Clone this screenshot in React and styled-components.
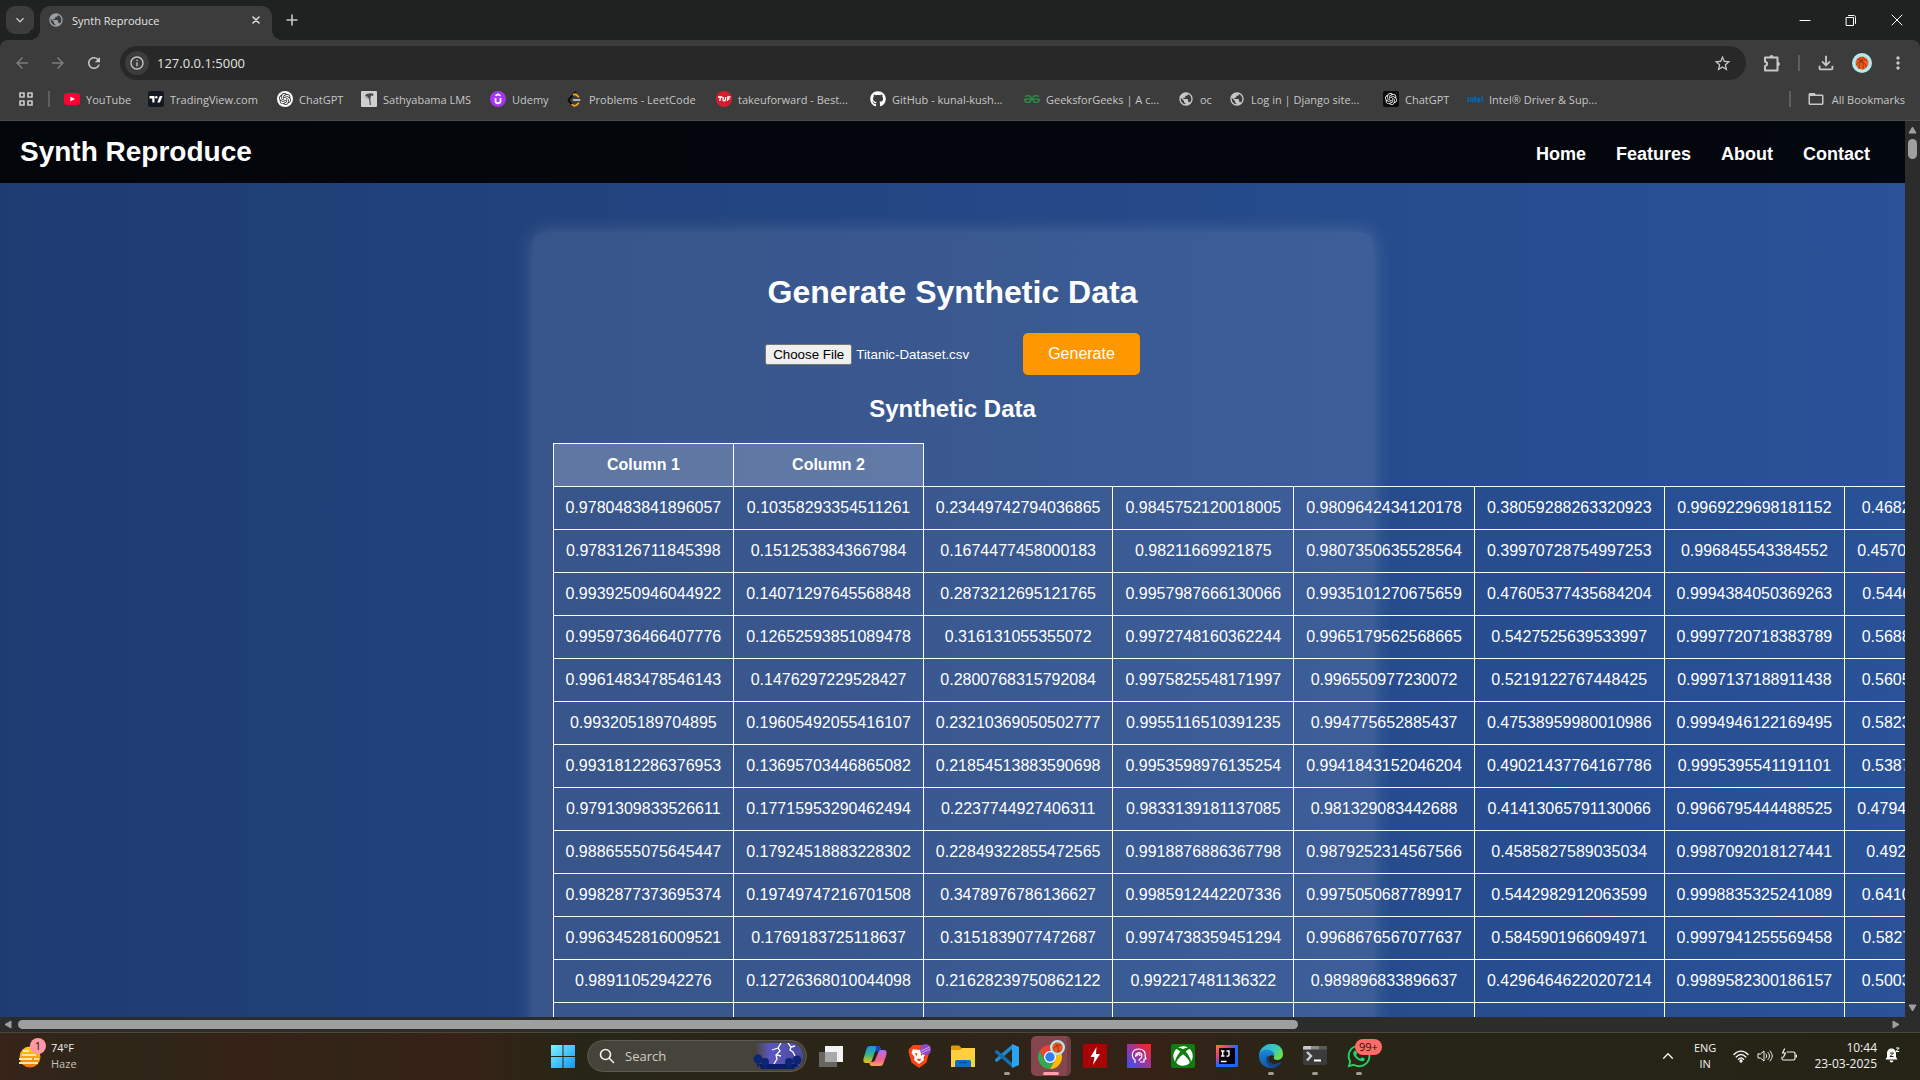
import React, { useEffect, useRef } from "react";
import styled, { createGlobalStyle } from "styled-components";
import {
  MdArrowBack, MdArrowForward, MdRefresh, MdStarBorder,
  MdOutlineFileDownload, MdMoreVert, MdFolderOpen, MdPublic, MdInfoOutline, MdExpandMore,
} from "react-icons/md";
import { FaGithub, FaXbox, FaWhatsapp } from "react-icons/fa";
import { SiOpenai, SiGeeksforgeeks } from "react-icons/si";

const UI = `"Open Sans", "Noto Sans", sans-serif`;
const ARIAL = `"Liberation Sans", Arial, sans-serif`;

const GlobalStyle = createGlobalStyle`
  *, *::before, *::after { box-sizing: border-box; }
  body { margin: 0; overflow: hidden; background: #1f2221; }
  svg { display: block; flex: none; }
`;

const Desktop = styled.div`
  display: flex;
  flex-direction: column;
  height: 100vh;
  font-family: ${UI};
  font-size: 12px;
  color: #c7c7c7;
`;

/* ---------- browser frame ---------- */

const TabStrip = styled.header`
  display: flex;
  align-items: center;
  height: 40px;
  flex: none;
  background: #1f2221;
`;

const IconButton = styled.button`
  display: flex;
  align-items: center;
  justify-content: center;
  flex: none;
  width: ${(p) => p.$w || 36}px;
  height: ${(p) => p.$h || 28}px;
  padding: 0;
  border: 0;
  border-radius: ${(p) => p.$radius || 0}px;
  background: ${(p) => p.$bg || "transparent"};
  color: ${(p) => p.$color || "#c7c7c7"};
`;

const TabSearch = styled(IconButton)`
  margin: 0 6px;
`;

const Tab = styled.div`
  position: relative;
  display: flex;
  align-items: center;
  align-self: flex-end;
  width: 232px;
  height: 34px;
  padding: 0 4px 6px 8px;
  border-radius: 10px 10px 0 0;
  background: #3c3c3c;
  color: #e3e3e3;
  font-size: 11px;

  &::before, &::after {
    content: "";
    position: absolute;
    bottom: 0;
    width: 10px;
    height: 10px;
  }
  &::before {
    right: 100%;
    background: radial-gradient(circle at 0 0, #1f2221 10px, #3c3c3c 10px);
  }
  &::after {
    left: 100%;
    background: radial-gradient(circle at 100% 0, #1f2221 10px, #3c3c3c 10px);
  }
`;

const TabTitle = styled.span`
  flex: 1;
  margin-left: 8px;
  white-space: nowrap;
`;

const NewTab = styled(IconButton)`
  margin-left: 6px;
`;

const WindowControls = styled.div`
  display: flex;
  margin-left: auto;
`;

const Toolbar = styled.div`
  display: flex;
  align-items: center;
  flex: none;
  height: 46px;
  padding: 0 4px;
  background: #3c3c3c;
  border-radius: 8px 8px 0 0;
`;

const AddressBar = styled.div`
  display: flex;
  align-items: center;
  flex: 1;
  height: 34px;
  margin: 0 8px;
  padding: 0 6px 0 5px;
  border-radius: 17px;
  background: #282828;
`;

const AddressInput = styled.input`
  flex: 1;
  min-width: 0;
  margin-left: 8px;
  padding: 0;
  border: 0;
  outline: 0;
  background: transparent;
  color: #e3e3e3;
  font-family: ${UI};
  font-size: 13px;
  line-height: 20px;
`;

const Divider = styled.span`
  flex: none;
  width: 2px;
  height: 16px;
  background: #5c5e5f;
`;

const ToolbarDivider = styled(Divider)`
  margin: 0 8px;
`;

const BookmarksBar = styled.nav`
  display: flex;
  align-items: center;
  flex: none;
  height: 35px;
  padding: 0 15px 8px 18px;
  border-bottom: 1px solid #4c4c4c;
  background: #3c3c3c;
  font-size: 11px;
`;

const AppsDivider = styled(Divider)`
  margin: 0 14px;
`;

const BookmarkList = styled.div`
  display: flex;
  flex: 1;
  min-width: 0;
`;

const Bookmark = styled.a`
  display: flex;
  align-items: center;
  gap: 6px;
  flex: none;
  width: ${(p) => (p.$w ? `${p.$w}px` : "auto")};
  color: #c7c7c7;
  text-decoration: none;
  white-space: nowrap;
`;

const AllBookmarks = styled(Bookmark)`
  margin-left: 16px;
  gap: 7px;
`;

const Favicon = styled.span`
  display: flex;
  align-items: center;
  justify-content: center;
  flex: none;
  width: 16px;
  height: 16px;
  border-radius: ${(p) => p.$radius || 0}px;
  background: ${(p) => p.$bg || "transparent"};
  color: ${(p) => p.$color || "#fff"};
`;

/* ---------- page viewport and scrollbars ---------- */

const Viewport = styled.div`
  display: grid;
  grid-template-columns: minmax(0, 1fr) 15px;
  grid-template-rows: minmax(0, 1fr) 15px;
  flex: 1;
  min-height: 0;
  background: #2c2c2c;
`;

const Page = styled.main`
  overflow: hidden;
  background: linear-gradient(to right, #1e3c72, #2a5298);
  font-family: ${ARIAL};
  font-size: 16px;
  line-height: 18px;
  color: #fff;
  text-align: center;
`;

const VerticalBar = styled.div`
  display: flex;
  flex-direction: column;
  align-items: center;
  padding: 5px 0;
`;

const VerticalThumb = styled.span`
  width: 9px;
  height: 20px;
  margin: 5px 0 auto;
  border-radius: 5px;
  background: #9f9f9f;
`;

const HorizontalBar = styled.div`
  display: flex;
  align-items: center;
  padding: 0 5px 0 4px;
`;

const HorizontalTrack = styled.span`
  flex: 1;
  margin: 0 6px;
`;

const HorizontalThumb = styled.span`
  display: block;
  width: calc(100% * 1905 / 2780);
  height: 9px;
  border-radius: 5px;
  background: #9f9f9f;
`;

const SiteHeader = styled.header`
  display: flex;
  align-items: center;
  justify-content: space-between;
  padding: 15px 20px;
  background: rgba(0, 0, 0, 0.91);
`;

const Logo = styled.div`
  font-size: 28px;
  line-height: 32px;
  font-weight: bold;
`;

const SiteNav = styled.nav`
  display: flex;
  gap: 30px;
  padding: 5px 15px 0;
`;

const NavLink = styled.a`
  color: #fff;
  font-size: 18px;
  line-height: 21px;
  font-weight: bold;
  text-decoration: none;
`;

const Card = styled.section`
  max-width: 840px;
  margin: 50px auto;
  padding: 20px;
  border-radius: 10px;
  background: rgba(255, 255, 255, 0.1);
  box-shadow: 0 0 20px rgba(255, 255, 255, 0.2);
`;

const Title = styled.h1`
  margin: 21px 0 23px;
  font-size: 32px;
  line-height: 36px;
`;

const Subtitle = styled.h2`
  margin: 20px 0 21px;
  font-size: 24px;
  line-height: 27px;
`;

const UploadForm = styled.form`
  display: flex;
  align-items: center;
  justify-content: center;
  gap: 5px;
`;

const FileInput = styled.input`
  width: 253px;
  color: #fff;
  font-family: ${ARIAL};
`;

const GenerateButton = styled.button`
  padding: 12px 25px;
  border: 0;
  border-radius: 5px;
  background: #ff9800;
  color: #fff;
  font-family: ${ARIAL};
  font-size: 16px;
  line-height: 18px;
`;

const DataTable = styled.table`
  width: 100%;
  border-collapse: collapse;
  white-space: nowrap;

  th, td {
    height: 43px;
    padding: 12px;
    border: 1px solid #fff;
  }
  th {
    background: rgba(255, 255, 255, 0.2);
  }
`;

/* ---------- taskbar ---------- */

const Taskbar = styled.footer`
  display: grid;
  grid-template-columns: 1fr auto 1fr;
  align-items: center;
  flex: none;
  height: 48px;
  padding: 0 0 2px 2px;
  border-top: 1px solid #4b473d;
  background: linear-gradient(
    to right, #38241a 0%, #2f2518 4%, #2d2517 8%, #352217 12%, #322317 18%, #372217 24%,
    #272616 30%, #2b2518 45%, #2f2418 52%, #352217 60%, #2a2517 67%, #272516 75%, #242416 100%
  );
  color: #f2f2f2;
`;

const Weather = styled.div`
  display: flex;
  align-items: center;
  gap: 7px;
  padding-left: 16px;
  line-height: 16px;
  font-size: 11px;
`;

const WeatherIcon = styled.span`
  position: relative;
  width: 26px;
  height: 30px;
  padding-top: 4px;
`;

const Badge = styled.span`
  position: absolute;
  top: ${(p) => p.$top}px;
  left: ${(p) => p.$left}px;
  min-width: 16px;
  padding: 0 ${(p) => p.$pad || 0}px;
  border-radius: 8px;
  background: ${(p) => p.$bg};
  color: #1c1010;
  font-size: 11px;
  line-height: 16px;
  text-align: center;
`;

const Muted = styled.div`
  color: #c9c2bd;
`;

const Apps = styled.div`
  display: flex;
  align-items: center;
`;

const AppButton = styled.button`
  position: relative;
  display: flex;
  align-items: center;
  justify-content: center;
  width: 44px;
  height: 40px;
  padding: 0;
  border: 0;
  background: transparent;
  font-family: ${UI};

  &::after {
    content: "";
    position: absolute;
    bottom: 1px;
    left: calc(50% - ${(p) => (p.$active ? 8 : 3)}px);
    width: ${(p) => (p.$active ? 16 : p.$open ? 6 : 0)}px;
    height: 3px;
    border-radius: 2px;
    background: ${(p) => (p.$active ? "#ff9fab" : "#a09c92")};
  }
`;

const ActiveTile = styled.span`
  display: flex;
  align-items: center;
  justify-content: center;
  width: 40px;
  height: 40px;
  border-right: 4px solid #713d41;
  border-radius: 5px;
  background: #84454c;
`;

const XboxTile = styled.span`
  display: flex;
  align-items: center;
  justify-content: center;
  width: 24px;
  height: 24px;
  border-radius: 2px;
  background: #107c10;
  color: #fff;
`;

const SearchBox = styled.label`
  display: flex;
  align-items: center;
  width: 220px;
  height: 32px;
  margin: 0 2px;
  padding: 0 3px 0 11px;
  border: 1px solid #5c5a4e;
  border-radius: 16px;
  background: #46443a;
`;

const SearchInput = styled.input`
  flex: 1;
  min-width: 0;
  margin-left: 10px;
  padding: 0;
  border: 0;
  outline: 0;
  background: transparent;
  font-family: ${UI};
  font-size: 13px;

  &::placeholder { color: #cfcdc6; opacity: 1; }
`;

const Tray = styled.div`
  display: flex;
  align-items: center;
  justify-content: flex-end;
  padding-right: 20px;
  font-size: 12px;
  line-height: 16px;
`;

const Language = styled.div`
  margin: 0 17px 0 19px;
  font-size: 11px;
  text-align: center;
`;

const StatusIcons = styled.div`
  display: flex;
  gap: 8px;
`;

const Clock = styled.div`
  margin: 0 7px 0 17px;
  text-align: right;
`;

/* ---------- drawings ---------- */

const Triangle = ({ d, w = 9, h = 8 }) => (
  <svg width={w} height={h} viewBox={`0 0 ${w} ${h}`} fill="#9f9f9f" stroke="#9f9f9f" strokeLinejoin="round"><path d={d} /></svg>
);
const Line = ({ d, size = 16, width = 1, children }) => (
  <svg width={size} height={size} viewBox="0 0 16 16" fill="none" stroke="currentColor" strokeWidth={width} strokeLinejoin="round" strokeLinecap="round">
    <path d={d} />{children}
  </svg>
);

const ExtensionIcon = () => (
  <svg width="20" height="20" viewBox="0 0 20 20" fill="none" stroke="currentColor" strokeWidth="2" strokeLinejoin="round">
    <path d="M3 4.500h12.500v13H3V13c2.800-.3 2.800-4 0-4.300z" />
    <path d="M7.500 4a2 2 0 0 1 4 0zM16 9a2 2 0 0 1 0 4z" fill="currentColor" stroke="none" />
  </svg>
);
const YouTubeIcon = () => (
  <svg width="16" height="16" viewBox="0 0 16 16"><rect y="2" width="16" height="12" rx="3" fill="#ff0033" /><path d="M6.400 5.400v5.200L11 8z" fill="#fff" /></svg>
);
const TradingIcon = () => (
  <svg width="16" height="16" viewBox="0 0 16 16"><rect width="16" height="16" rx="2" fill="#131722" /><path d="M1.500 5h5v6.500H4.300V7.500H1.500z" fill="#fff" /><circle cx="8.300" cy="6.200" r="1.200" fill="#fff" /><path d="M11.800 5h2.800l-2.700 6.500H9.200z" fill="#fff" /></svg>
);
const SathyabamaIcon = () => (
  <svg width="16" height="16" viewBox="0 0 16 16"><rect width="16" height="16" rx="1" fill="#d0d0d0" /><path d="M4 4.500c1-2 7-3 8.500-1.500l-.5 2-2-.5L9.300 8 10 14H8.800L8 8 6.500 6z" fill="#4b4b4b" /><path d="M4 5.500 6.500 8" stroke="#8a8a8a" /></svg>
);
const UdemyIcon = () => (
  <svg width="16" height="16" viewBox="0 0 16 16" fill="none" stroke="#fff" strokeWidth="1.800"><circle cx="8" cy="8" r="8" fill="#a435f0" stroke="none" /><path d="M5.500 4.800 8 3.300l2.500 1.500M5.500 7v3c0 3 5 3 5 0V7" /></svg>
);
const LeetIcon = () => (
  <svg width="16" height="16" viewBox="0 0 24 24" fill="none" strokeWidth="2.800" strokeLinecap="round"><path d="M13 2 3.500 12c-1 1-1 3 0 4l4.500 4.500" stroke="#0b0b0b" /><path d="M8 20.500c2 2 5 2 7 0l2-2M17 8.500l-2-2c-1.500-1.500-3.500-2-5-1" stroke="#ffa116" /><path d="M10 13.500h9" stroke="#b3b3b3" /></svg>
);
const TufIcon = () => (
  <svg width="16" height="16" viewBox="0 0 16 16"><circle cx="8" cy="8" r="8" fill="#d41f2d" /><path d="M2 6h4.500M4.500 6l-.700 4M7.300 6 7 9c0 1.200 2 1.200 2.300 0L9.700 6M11.300 10l.600-4H14.500M11.600 8h2" stroke="#fff" strokeWidth="1.300" fill="none" /></svg>
);
const IntelIcon = () => (
  <svg width="16" height="16" viewBox="0 0 16 16" fill="none" stroke="#0068b5" strokeWidth="1.500"><path d="M1 6v5M3.500 11V8c0-1.500 2.500-1.500 2.500 0v3M8 5v5c0 .800.500 1 1.200 1M7 7h2.300M13 10.500c-3 1.500-3-3.500-1.200-3.300 1.500 0 1.500 2-.800 2M15 4.500V11M.800 4.500h.700" /></svg>
);
const BallIcon = ({ size }) => (
  <svg width={size} height={size} viewBox="0 0 20 20"><circle cx="10" cy="10" r="10" fill="#b5e9ee" /><circle cx="10" cy="10" r="6.500" fill="#f15a1c" /><path d="M4 12c3-4 8-6 11-5M7 4.500c3 2 5 7 4 12M5 6c4 1 8 4 9.500 8M12 4c-3 2-5 7-5 12" stroke="#7d2f14" strokeWidth=".8" fill="none" /></svg>
);

const HazeIcon = () => (
  <svg width="24" height="24" viewBox="0 0 24 24">
    <defs><linearGradient id="sun" x2="0" y2="1"><stop stopColor="#ffd21c" /><stop offset="1" stopColor="#f2700c" /></linearGradient></defs>
    <circle cx="12" cy="12" r="10.500" fill="url(#sun)" />
    <path d="M5 6h6M4 10h14M1 14h13m2 0h5M1 18h19" stroke="#fbe6ae" strokeWidth="2" />
  </svg>
);
const StartIcon = () => (
  <svg width="24" height="24" viewBox="0 0 24 24"><defs><linearGradient id="win" x2="1" y2="1"><stop stopColor="#82f3ff" /><stop offset="1" stopColor="#0f95f5" /></linearGradient></defs><path d="M0 1h11.500v11H0zM12.500 1H24v11H12.500zM0 13h11.500v11H0zM12.500 13H24v11H12.500z" fill="url(#win)" /></svg>
);
const StormArt = () => (
  <svg width="50" height="26" viewBox="0 0 50 26">
    <defs><linearGradient id="sky" x2="1"><stop stopColor="#5957b8" stopOpacity="0" /><stop offset=".3" stopColor="#5b57c0" /><stop offset="1" stopColor="#4a4a9c" /></linearGradient></defs>
    <path d="M2 0h36a12 13 0 0 1 0 26H8z" fill="url(#sky)" />
    <path d="M6 21h38l3-2-6 7H8z" fill="#0a1c6b" />
    <g fill="#0e2474"><circle cx="5" cy="16" r="4.500" /><circle cx="12" cy="19" r="4" /><circle cx="36" cy="19" r="4" /><circle cx="44" cy="17" r="4.500" /><path d="M4 18h2v6H4zM11 20h2v5h-2zM35 20h2v5h-2zM43 18h2v6h-2z" /></g>
    <path d="m28 0-3 5 2 3-4 4 1 4-3 5M25 5l-6 2M24 12l4 1M35 0l3 4-1 3 3 2 2 4M38 4l4-1" stroke="#fff" strokeWidth="1.300" fill="none" />
  </svg>
);
const TaskViewIcon = () => (
  <svg width="24" height="24" viewBox="0 0 24 24"><path d="M6 2h18v16H6z" fill="#f3f3f3" /><path d="M0 8h18v15H0z" fill="#777" fillOpacity=".8" /><path d="M6 8h12v10H6z" fill="#a9a9a9" /></svg>
);
const CopilotIcon = () => (
  <svg width="24" height="24" viewBox="0 0 24 24">
    <defs>
      <linearGradient id="cpa" x2="0" y2="1"><stop stopColor="#1b8fe8" /><stop offset=".5" stopColor="#35b38f" /><stop offset="1" stopColor="#f5c400" /></linearGradient>
      <linearGradient id="cpb" x2="0" y2="1"><stop stopColor="#b06cf2" /><stop offset=".6" stopColor="#f0608f" /><stop offset="1" stopColor="#ffa05c" /></linearGradient>
    </defs>
    <path d="M7 2h8c2 0 2.500 2 3 4h-3c-2 0-3 1-3.500 3L9 16c-.6 2-1.500 3-3 3H3c-3 0-3-3-2-6l2.500-8C4 3 5 2 7 2z" fill="url(#cpa)" />
    <path d="M13 2h2c2 0 2.500 2 3 4l.5 1H15c-1 0-2 .5-2.500 2z" fill="#1746b8" />
    <path d="M17 22H9c-2 0-2.500-2-3-4h3c2 0 3-1 3.500-3L15 9c.6-2 1.500-3 3-3h3c3 0 3 3 2 6l-2.500 7c-.500 2-1.500 3-3.500 3z" fill="url(#cpb)" />
  </svg>
);
const BraveIcon = () => (
  <svg width="24" height="24" viewBox="0 0 24 24"><path d="M6 1h11l2 2 3 1v5l-2.500 9.500L12 24l-7.500-5.500L1.500 8 2 5l2-2z" fill="#fb4314" /><path d="m6 5 6 1 6-1 1.500 4-3 4 .5 3-5 4-5-4 .5-3-3-4z" fill="#fff" /><path d="m7.500 9 3 .5-1 2.500zm9 0-3 .5 1 2.500zM9.500 15.500l2.500-1 2.500 1-2.500 2z" fill="#fb4314" /><circle cx="18.500" cy="5.500" r="5.500" fill="#8b4dc7" /><path d="m14 7 8.500-4M15 9l8-4" stroke="#d5a3f0" /></svg>
);
const FolderIcon = () => (
  <svg width="24" height="24" viewBox="0 0 24 24"><path d="M0 3c0-1 .5-1.500 1.500-1.500H8L10.500 4v4H0z" fill="#e09a05" /><path d="M0 6h9l2-2h13v19H0z" fill="#ffcf3e" /><path d="M4 23v-5c0-1.500 1-2 2-2h12c1 0 2 .5 2 2v5z" fill="#0f6fc6" /><path d="M8 18.500h8" stroke="#0a4c94" strokeWidth="1.500" /></svg>
);
const CodeIcon = () => (
  <svg width="24" height="24" viewBox="0 0 24 24"><path d="M17 3 1.800 16" stroke="#2489ca" strokeWidth="3.600" strokeLinecap="round" /><path d="M17 21 1.800 8" stroke="#1070b3" strokeWidth="3.600" strokeLinecap="round" /><path d="M17 0l7 3v18l-7 3z" fill="#2aa3f0" /></svg>
);
const ChromeIcon = () => (
  <svg width="32" height="32" viewBox="0 0 32 32">
    <g transform="translate(5 5) scale(.5)"><path d="M24 12h20.800A24 24 0 0 0 3.200 12l10.400 18z" fill="#ea4335" /><path d="M13.600 30 3.200 12A24 24 0 0 0 24 48l10.400-18z" fill="#34a853" /><path d="M34.400 30 24 48A24 24 0 0 0 44.800 12H24z" fill="#fbbc04" /><circle cx="24" cy="24" r="12" fill="#fff" /><circle cx="24" cy="24" r="9.500" fill="#2f7ff0" /></g>
    <g transform="translate(17 0) scale(.75)"><circle cx="10" cy="10" r="10" fill="#b5e9ee" /><circle cx="10" cy="10" r="7" fill="#e9551f" /><path d="M4 12c3-4 8-6 11-5M7 4.500c3 2 5 7 4 12" stroke="#7d2f14" fill="none" /></g>
  </svg>
);
const BoltIcon = () => (
  <svg width="24" height="24" viewBox="0 0 24 24"><path d="M0 0h24v24H0z" fill="#a80406" /><path d="m13.500 3-6 10h4L10 21l7-11h-4z" fill="#fff" /></svg>
);
const HeadIcon = () => (
  <svg width="24" height="24" viewBox="0 0 24 24"><defs><linearGradient id="hd" y1="1" x2="1" y2="0"><stop stopColor="#3350ff" /><stop offset=".5" stopColor="#a0349c" /><stop offset="1" stopColor="#ff2414" /></linearGradient></defs><path d="M0 0h24v24H0z" fill="url(#hd)" /><path d="M8 19v-3c-4-3-4-11 4-11 5 0 7 4 6 7l1 3h-2v3h-4M9 13c-2-5 6-6 6-1 0 3-3 2-3 5m-2-5c0-3 3-2 3 0" stroke="#fff" strokeWidth="1.200" fill="none" strokeLinejoin="round" /></svg>
);
const IdeaIcon = () => (
  <svg width="22" height="22" viewBox="0 0 22 22"><defs><linearGradient id="ij" x2="1" y2="1"><stop stopColor="#fc801d" /><stop offset=".3" stopColor="#e0407d" /><stop offset=".5" stopColor="#216cff" /><stop offset="1" stopColor="#1a62f0" /></linearGradient></defs><path d="M0 0h22v22H0z" fill="url(#ij)" /><path d="M3 3h16v16H3z" fill="#09000c" /><path d="M5 6h3.500M6.700 6v5M5 11h3.500M10.500 6H13v4c0 1.200-1.500 1.500-2.500.7M5 16.500h5.500" stroke="#fff" strokeWidth="1.400" fill="none" /></svg>
);
const EdgeIcon = () => (
  <svg width="24" height="24" viewBox="0 0 24 24"><defs><linearGradient id="ea" x2="1" y2=".6"><stop stopColor="#2aa8e0" /><stop offset=".6" stopColor="#35c8c0" /><stop offset="1" stopColor="#6ae04a" /></linearGradient><linearGradient id="eb" x2="0" y2="1"><stop stopColor="#1d86d8" /><stop offset="1" stopColor="#0c5aa8" /></linearGradient></defs><path d="M0 12C1-4 24-4 24 10c0 4-3 6-6 6-2 0-4-1-3-3 1-3-1-5-4-5-5 0-10 2-11 4z" fill="url(#ea)" /><path d="M0 12C0 7 5 5 9 6c4 0 7 3 6 6-3-2-6 0-6 3 0 5 7 7 13 3-2 4-6 6-10 6C5 24 0 19 0 12z" fill="url(#eb)" /><path d="M9 11c-5 5 0 12 5 12.500 4-.5 7-3 8-5.500-6 4-13 2-13-3z" fill="#17438c" /></svg>
);
const TerminalIcon = () => (
  <svg width="24" height="20" viewBox="0 0 24 20"><rect width="24" height="19" rx="1.500" fill="#3b3b3d" /><path d="M0 1.500C0 .5.500 0 1.500 0H8v3.500H0z" fill="#c9c9c9" /><path d="M8 0h8v3.500H8z" fill="#8b8b8b" /><path d="M16 0h6.500c1 0 1.500.5 1.500 1.500v2h-8z" fill="#5b5b5b" /><path d="m4 6 4 4-4 4.500" stroke="#cfcfcf" strokeWidth="2.400" fill="none" /><path d="M11 14.500h7" stroke="#fff" strokeWidth="2" /></svg>
);
const WifiIcon = () => <Line d="M1 6.500c4-4.500 10-4.500 14 0M3.200 9c3-3.300 6.600-3.300 9.600 0M5.400 11.300c1.700-1.700 3.500-1.700 5.200 0" width={1.400}><circle cx="8" cy="13" r="1" fill="currentColor" /></Line>;
const VolumeIcon = () => <Line d="M1 6v4h2.500L7 13V3L3.500 6zM9 6c1 1 1 3 0 4M11 4.500c2 2 2 5 0 7M13 3c3 3 3 7 0 10" />;
const BatteryIcon = () => <Line d="M6 4h6.500c1 0 1.500.5 1.500 1.500v5c0 1-.5 1.500-1.500 1.500h-10C1.500 12 1 11.500 1 10.500V9M15.500 7v2M3.500 1 1.500 5h3l-2 4" width={1.200} />;
const BellIcon = () => (
  <svg width="16" height="17" viewBox="0 0 16 17"><path d="M3 10V7c0-4 2-5.500 4.500-5.500S12 3 12 7v3l1.500 2.500h-12zM5.500 13.500h4c-.5 2.500-3.500 2.500-4 0z" fill="#fff" /><path d="M6 6h3.500L6 9.500h3.500" stroke="#24221a" fill="none" /><path d="M12 1h3.200L12 4.500h3.200" stroke="#fff" fill="none" /></svg>
);

/* ---------- data ---------- */

const BOOKMARKS = [
  ["YouTube", 84, <YouTubeIcon />],
  ["TradingView.com", 129, <TradingIcon />],
  ["ChatGPT", 84, <Favicon $bg="#fff" $radius={8} $color="#222"><SiOpenai size={12} /></Favicon>],
  ["Sathyabama LMS", 129, <SathyabamaIcon />],
  ["Udemy", 77, <UdemyIcon />],
  ["Problems - LeetCode", 149, <LeetIcon />],
  ["takeuforward - Best...", 154, <TufIcon />],
  ["GitHub - kunal-kush...", 154, <FaGithub size={16} color="#fff" />],
  ["GeeksforGeeks | A c...", 154, <SiGeeksforgeeks size={16} color="#2f8d46" />],
  ["oc", 51, <MdPublic size={16} />],
  ["Log in | Django site...", 154, <MdPublic size={16} />],
  ["ChatGPT", 84, <Favicon $bg="#0b0b0b" $radius={2}><SiOpenai size={12} /></Favicon>],
  ["Intel® Driver & Sup...", 154, <IntelIcon />],
];

const ROWS = [
  ["0.9780483841896057", "0.10358293354511261", "0.23449742794036865", "0.9845752120018005", "0.9809642434120178", "0.38059288263320923", "0.9969229698181152", "0.4682740271091461"],
  ["0.9783126711845398", "0.1512538343667984", "0.1674477458000183", "0.98211669921875", "0.9807350635528564", "0.39970728754997253", "0.996845543384552", "0.45706483721733093"],
  ["0.9939250946044922", "0.14071297645568848", "0.2873212695121765", "0.9957987666130066", "0.9935101270675659", "0.47605377435684204", "0.9994384050369263", "0.5446230173110962"],
  ["0.9959736466407776", "0.12652593851089478", "0.316131055355072", "0.9972748160362244", "0.9965179562568665", "0.5427525639533997", "0.9997720718383789", "0.5688240528106689"],
  ["0.9961483478546143", "0.1476297229528427", "0.2800768315792084", "0.9975825548171997", "0.996550977230072", "0.5219122767448425", "0.9997137188911438", "0.5605278015136719"],
  ["0.993205189704895", "0.19605492055416107", "0.23210369050502777", "0.9955116510391235", "0.994775652885437", "0.47538959980010986", "0.9994946122169495", "0.5823065042495728"],
  ["0.9931812286376953", "0.13695703446865082", "0.21854513883590698", "0.9953598976135254", "0.9941843152046204", "0.49021437764167786", "0.9995395541191101", "0.5387206077575684"],
  ["0.9791309833526611", "0.17715953290462494", "0.2237744927406311", "0.9833139181137085", "0.981329083442688", "0.41413065791130066", "0.9966795444488525", "0.47942063212394714"],
  ["0.9886555075645447", "0.17924518883228302", "0.22849322855472565", "0.9918876886367798", "0.9879252314567566", "0.4585827589035034", "0.9987092018127441", "0.492530286312103"],
  ["0.9982877373695374", "0.19749747216701508", "0.3478976786136627", "0.9985912442207336", "0.9975050687789917", "0.5442982912063599", "0.9998835325241089", "0.6410284042358398"],
  ["0.9963452816009521", "0.1769183725118637", "0.3151839077472687", "0.9974738359451294", "0.9968676567077637", "0.5845901966094971", "0.9997941255569458", "0.5827036499977112"],
  ["0.98911052942276", "0.12726368010044098", "0.21628239750862122", "0.992217481136322", "0.989896833896637", "0.42964646220207214", "0.9989582300186157", "0.5003248453140259"],
  ["", "", "", "", "", "", "", ""],
];

const APPS = [
  { name: "Task view", icon: <TaskViewIcon /> },
  { name: "Copilot", icon: <CopilotIcon /> },
  { name: "Brave", icon: <BraveIcon /> },
  { name: "File Explorer", icon: <FolderIcon /> },
  { name: "Visual Studio Code", icon: <CodeIcon />, open: true },
  { name: "Google Chrome", icon: <ActiveTile><ChromeIcon /></ActiveTile>, active: true },
  { name: "Boost", icon: <BoltIcon /> },
  { name: "Assistant", icon: <HeadIcon /> },
  { name: "Xbox", icon: <XboxTile><FaXbox size={20} /></XboxTile> },
  { name: "IntelliJ IDEA", icon: <IdeaIcon /> },
  { name: "Edge", icon: <EdgeIcon />, open: true },
  { name: "Terminal", icon: <TerminalIcon />, open: true },
  { name: "WhatsApp", icon: <FaWhatsapp size={26} color="#25d366" />, open: true, badge: "99+" },
];

/* ---------- sections ---------- */

function BrowserFrame() {
  return (
    <>
      <TabStrip>
        <TabSearch $w={28} $radius={9} $bg="#3c3c3c" aria-label="Search tabs"><MdExpandMore size={16} /></TabSearch>
        <Tab>
          <MdPublic size={16} color="#9aa0a6" />
          <TabTitle>Synth Reproduce</TabTitle>
          <IconButton $w={24} $color="#e3e3e3" aria-label="Close tab"><Line size={12} width={2} d="M4 4l8 8M12 4l-8 8" /></IconButton>
        </Tab>
        <NewTab $w={28} aria-label="New tab"><Line width={1.6} d="M8 3v10M3 8h10" /></NewTab>
        <WindowControls>
          <IconButton $w={46} $color="#fff" aria-label="Minimize"><Line d="M3 8.500h10" /></IconButton>
          <IconButton $w={46} $color="#fff" aria-label="Restore"><Line d="M3.500 5.500h7v8h-7zM5.500 3.500h5c1.500 0 2 .5 2 2v6" /></IconButton>
          <IconButton $w={46} $color="#fff" aria-label="Close"><Line d="M3 3l10 10M13 3 3 13" /></IconButton>
        </WindowControls>
      </TabStrip>
      <Toolbar>
        <IconButton $color="#7c7c7c" aria-label="Back"><MdArrowBack size={18} /></IconButton>
        <IconButton $color="#7c7c7c" aria-label="Forward"><MdArrowForward size={18} /></IconButton>
        <IconButton aria-label="Reload"><MdRefresh size={18} /></IconButton>
        <AddressBar>
          <IconButton $w={24} $h={24} $radius={12} $bg="#3c3c3c" aria-label="Site information"><MdInfoOutline size={16} /></IconButton>
          <AddressInput aria-label="Address" defaultValue="127.0.0.1:5000" />
          <IconButton aria-label="Bookmark this tab"><MdStarBorder size={19} /></IconButton>
        </AddressBar>
        <IconButton aria-label="Extensions"><ExtensionIcon /></IconButton>
        <ToolbarDivider />
        <IconButton aria-label="Downloads"><MdOutlineFileDownload size={22} /></IconButton>
        <IconButton aria-label="Profile"><BallIcon size={20} /></IconButton>
        <IconButton aria-label="Menu"><MdMoreVert size={20} /></IconButton>
      </Toolbar>
      <BookmarksBar>
        <Line width={1.700} d="M2 2h4v4H2zM10 2h4v4h-4zM2 10h4v4H2zM10 10h4v4h-4z" />
        <AppsDivider />
        <BookmarkList>
          {BOOKMARKS.map(([label, width, icon], i) => (
            <Bookmark key={i} $w={width} href="#">{icon}{label}</Bookmark>
          ))}
        </BookmarkList>
        <Divider />
        <AllBookmarks href="#"><MdFolderOpen size={18} />All Bookmarks</AllBookmarks>
      </BookmarksBar>
    </>
  );
}

function Upload() {
  const file = useRef(null);
  useEffect(() => {
    const chosen = new DataTransfer();
    chosen.items.add(new File(["PassengerId"], "Titanic-Dataset.csv"));
    file.current.files = chosen.files;
  }, []);
  return (
    <UploadForm onSubmit={(e) => e.preventDefault()}>
      <FileInput ref={file} type="file" aria-label="Dataset" />
      <GenerateButton type="submit">Generate</GenerateButton>
    </UploadForm>
  );
}

function SitePage() {
  return (
    <Page>
      <SiteHeader>
        <Logo>Synth Reproduce</Logo>
        <SiteNav>
          {["Home", "Features", "About", "Contact"].map((t) => <NavLink key={t} href="#">{t}</NavLink>)}
        </SiteNav>
      </SiteHeader>
      <Card>
        <Title>Generate Synthetic Data</Title>
        <Upload />
        <Subtitle>Synthetic Data</Subtitle>
        <DataTable>
          <thead><tr><th>Column 1</th><th>Column 2</th></tr></thead>
          <tbody>
            {ROWS.map((row, r) => <tr key={r}>{row.map((v, c) => <td key={c}>{v}</td>)}</tr>)}
          </tbody>
        </DataTable>
      </Card>
    </Page>
  );
}

function WindowsTaskbar() {
  return (
    <Taskbar>
      <Weather>
        <WeatherIcon><HazeIcon /><Badge $top={-3} $left={12} $bg="#ff99a4">1</Badge></WeatherIcon>
        <div><div>74°F</div><Muted>Haze</Muted></div>
      </Weather>
      <Apps>
        <AppButton aria-label="Start"><StartIcon /></AppButton>
        <SearchBox>
          <Line width={1.600} d="m10.500 10.500 4 4"><circle cx="6.500" cy="6.500" r="5" /></Line>
          <SearchInput placeholder="Search" aria-label="Search" />
          <StormArt />
        </SearchBox>
        {APPS.map((a) => (
          <AppButton key={a.name} aria-label={a.name} $open={a.open} $active={a.active}>
            {a.icon}
            {a.badge && <Badge $top={3} $left={18} $pad={4} $bg="#ff6b68">{a.badge}</Badge>}
          </AppButton>
        ))}
      </Apps>
      <Tray>
        <Line size={14} width={1.600} d="m3 10.500 5-5 5 5" />
        <Language>ENG<br />IN</Language>
        <StatusIcons><WifiIcon /><VolumeIcon /><BatteryIcon /></StatusIcons>
        <Clock>10:44<br />23-03-2025</Clock>
        <BellIcon />
      </Tray>
    </Taskbar>
  );
}

export default function App() {
  return (
    <Desktop>
      <GlobalStyle />
      <BrowserFrame />
      <Viewport>
        <SitePage />
        <VerticalBar>
          <Triangle d="M4.500 1 8 7H1z" />
          <VerticalThumb />
          <Triangle d="M4.500 7 8 1H1z" />
        </VerticalBar>
        <HorizontalBar>
          <Triangle w={8} h={9} d="M1 4.500 7 8V1z" />
          <HorizontalTrack><HorizontalThumb /></HorizontalTrack>
          <Triangle w={8} h={9} d="M7 4.500 1 8V1z" />
        </HorizontalBar>
      </Viewport>
      <WindowsTaskbar />
    </Desktop>
  );
}
